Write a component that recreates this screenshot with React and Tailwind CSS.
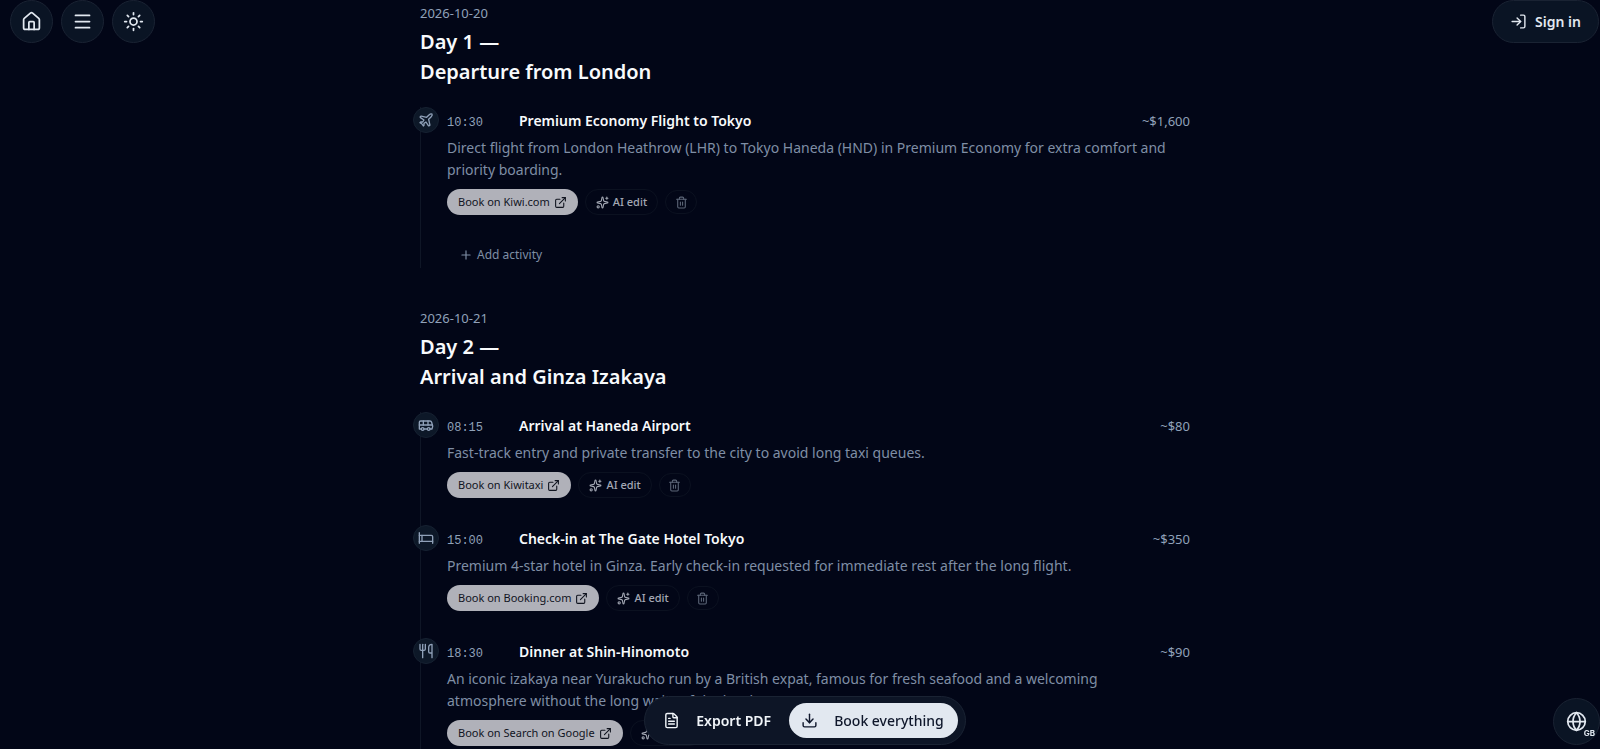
import {
  House,
  Menu,
  Sun,
  LogIn,
  Plane,
  Bus,
  Bed,
  Utensils,
  ExternalLink,
  Sparkles,
  Trash2,
  Plus,
  FileText,
  Download,
  Globe,
} from "lucide-react";
import { clsx } from "clsx";

// ─── Trip data ───────────────────────────────────────────────────────────────
const ICONS = {
  flight: Plane,
  transfer: Bus,
  hotel: Bed,
  food: Utensils,
};

const DAYS = [
  {
    date: "2026-10-20",
    label: "Day 1 —",
    title: "Departure from London",
    canAdd: true,
    activities: [
      {
        type: "flight",
        time: "10:30",
        title: "Premium Economy Flight to Tokyo",
        price: "~$1,600",
        description:
          "Direct flight from London Heathrow (LHR) to Tokyo Haneda (HND) in Premium Economy for extra comfort and priority boarding.",
        provider: "Kiwi.com",
      },
    ],
  },
  {
    date: "2026-10-21",
    label: "Day 2 —",
    title: "Arrival and Ginza Izakaya",
    canAdd: false,
    activities: [
      {
        type: "transfer",
        time: "08:15",
        title: "Arrival at Haneda Airport",
        price: "~$80",
        description: "Fast-track entry and private transfer to the city to avoid long taxi queues.",
        provider: "Kiwitaxi",
      },
      {
        type: "hotel",
        time: "15:00",
        title: "Check-in at The Gate Hotel Tokyo",
        price: "~$350",
        description:
          "Premium 4-star hotel in Ginza. Early check-in requested for immediate rest after the long flight.",
        provider: "Booking.com",
      },
      {
        type: "food",
        time: "18:30",
        title: "Dinner at Shin-Hinomoto",
        price: "~$90",
        description:
          "An iconic izakaya near Yurakucho run by a British expat, famous for fresh seafood and a welcoming atmosphere without the long waits of the local",
        provider: "Search on Google",
      },
    ],
  },
];

// ─── Shared pieces ───────────────────────────────────────────────────────────
const RoundButton = ({ label, className, children }) => (
  <button
    type="button"
    aria-label={label}
    className={clsx(
      "flex items-center justify-center rounded-full border border-[#1a2333] bg-[#0a1424] text-slate-200",
      className
    )}
  >
    {children}
  </button>
);

const Activity = ({ activity }) => {
  const Icon = ICONS[activity.type];

  return (
    <li className="flex gap-2 pb-[27px]">
      <span className="z-10 flex size-[26px] shrink-0 items-center justify-center rounded-full border border-[#162131] bg-[#0d1828] text-slate-400">
        <Icon size={16} strokeWidth={2} />
      </span>

      <div className="min-w-0 flex-1 pt-0.5">
        <div className="flex items-baseline">
          <span className="w-[72px] shrink-0 font-['Liberation_Mono',monospace] text-[12px] leading-6 text-slate-400">
            {activity.time}
          </span>
          <h3 className="flex-1 text-[14px] leading-6 font-semibold text-slate-50">{activity.title}</h3>
          <span className="text-[13px] leading-6 text-slate-400">{activity.price}</span>
        </div>

        <p className="mt-0.5 pr-4 text-[14px] leading-[22px] text-[#7f8ea5]">{activity.description}</p>

        {/* Actions */}
        <div className="mt-2 flex items-center gap-[7px]">
          <a
            href="#book"
            className="flex h-[26px] items-center gap-1 rounded-full bg-[#b0b1b9] px-[11px] text-[11px] text-[#10141f]"
          >
            Book on {activity.provider}
            <ExternalLink size={13} />
          </a>
          <button
            type="button"
            className="flex h-[26px] items-center gap-1 rounded-full border border-[#0b1120] px-[10px] text-[11px] font-medium text-[#a3a8b4]"
          >
            <Sparkles size={13} />
            AI edit
          </button>
          <button
            type="button"
            aria-label={`Delete ${activity.title}`}
            className="flex h-6 w-8 items-center justify-center rounded-full border border-[#0b1120] text-[#5c6678]"
          >
            <Trash2 size={13} />
          </button>
        </div>
      </div>
    </li>
  );
};

const Day = ({ day }) => (
  <section className="mb-10">
    <p className="text-[13px] leading-5 text-slate-400">{day.date}</p>
    <h2 className="mt-1 text-[20px] leading-[30px] font-semibold text-slate-50">
      {day.label}
      <br />
      {day.title}
    </h2>

    {/* Timeline: the rail runs behind the activity icons */}
    <div className="mt-5 border-l border-[#0f1626]">
      <ul className="-ml-2">
        {day.activities.map((activity) => (
          <Activity key={activity.time} activity={activity} />
        ))}
      </ul>
      {day.canAdd && (
        <button
          type="button"
          className="ml-[38px] flex h-[26px] items-center gap-1 text-[12px] text-[#7f8ea5]"
        >
          <Plus size={14} />
          Add activity
        </button>
      )}
    </div>
  </section>
);

// ─── Page ────────────────────────────────────────────────────────────────────
const App = () => (
  <div className="h-screen w-full overflow-hidden bg-[#020617] font-['Noto_Sans','Open_Sans',sans-serif]">
    {/* Top controls */}
    <header className="fixed inset-x-0 top-0 z-20 flex items-start justify-between pr-px pl-[10px]">
      <nav className="flex gap-2" aria-label="Main">
        <RoundButton label="Home" className="size-[43px]">
          <House size={21} />
        </RoundButton>
        <RoundButton label="Menu" className="size-[43px]">
          <Menu size={21} />
        </RoundButton>
        <RoundButton label="Toggle theme" className="size-[43px]">
          <Sun size={21} />
        </RoundButton>
      </nav>
      <RoundButton label="Sign in" className="h-[43px] gap-2 px-[17px] text-[14px] font-semibold">
        <LogIn size={17} />
        Sign in
      </RoundButton>
    </header>

    {/* Itinerary */}
    <main className="pl-[10px]">
      <div className="mx-auto max-w-[770px] pt-[3px]">
        {DAYS.map((day) => (
          <Day key={day.date} day={day} />
        ))}
      </div>
    </main>

    {/* Bottom actions */}
    <div className="pointer-events-none fixed inset-x-0 bottom-1 z-20 flex justify-center pl-[10px]">
      <div className="pointer-events-auto flex h-[49px] items-center rounded-full border border-[#1a2333] bg-[#0d1526] pr-[7px] pl-[18px] text-[14px]">
        <button type="button" className="flex items-center gap-4 pr-[18px] font-semibold text-slate-100">
          <FileText size={17} />
          Export PDF
        </button>
        <button
          type="button"
          className="flex h-[35px] items-center gap-4 rounded-full bg-slate-200 pr-[14px] pl-3 font-medium text-slate-900"
        >
          <Download size={17} />
          Book everything
        </button>
      </div>
    </div>
    <div className="fixed right-0 bottom-1 z-20">
      <RoundButton label="Change language" className="size-[47px]">
        <Globe size={21} />
      </RoundButton>
      <span className="absolute right-[5px] bottom-[6px] font-['Inter',sans-serif] text-[8px] leading-3 font-bold text-slate-200">
        GB
      </span>
    </div>
  </div>
);

export default App;
